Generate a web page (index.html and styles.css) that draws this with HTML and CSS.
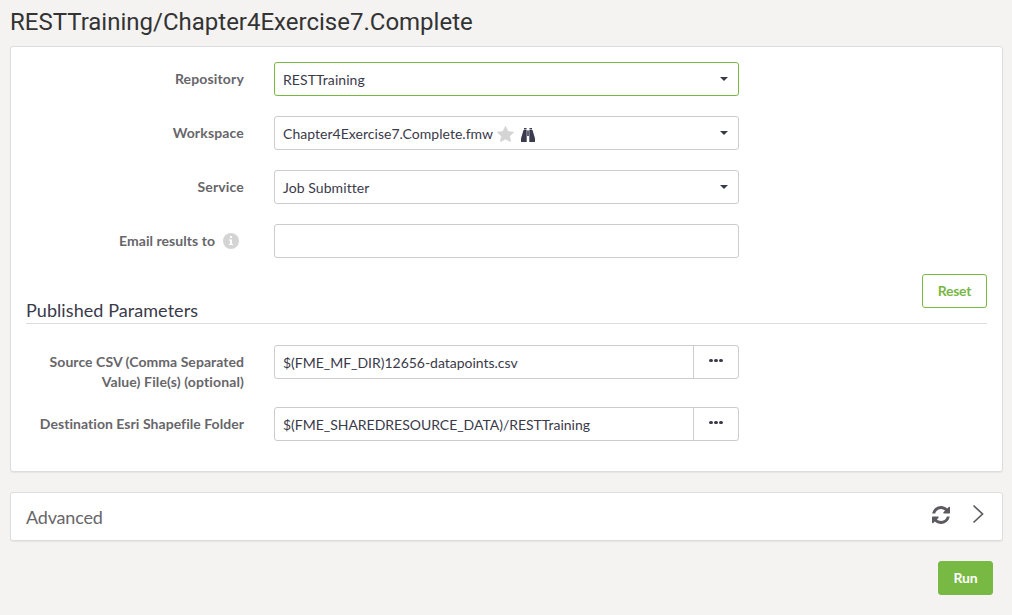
FILE: index.html
```html
<!DOCTYPE html>
<html lang="en">
<head>
<meta charset="utf-8">
<title>RESTTraining/Chapter4Exercise7.Complete</title>
<link rel="stylesheet" href="styles.css">
</head>
<body>
<h1>RESTTraining/Chapter4Exercise7.Complete</h1>
<main class="panel">
  <div class="row"><label class="short">Repository</label><div class="control active"><span class="value">RESTTraining</span><i class="caret"></i></div></div>
  <div class="row"><label class="short">Workspace</label><div class="control"><span class="value work">Chapter4Exercise7.Complete.fmw</span>
    <svg class="star" width="17" height="16" viewBox="0 0 17 16"><path fill="#d4d4d4" stroke="#d4d4d4" stroke-width=".6" stroke-linejoin="round" d="M8.500.3l2.600 5.100 5.600.8-4.100 4 1 5.500-5.100-2.600-5.100 2.600 1-5.500-4.100-4 5.600-.8z"/></svg>
    <svg class="binoculars" width="14" height="14" viewBox="0 0 14 14"><path fill="#3b3b50" d="M3 0h2.500v1.500H3zM8.500 0H11v1.500H8.500zM2.500 2H5.700V14H0V10.500zM8.300 2h3.200L14 10.500V14H8.300zM6.200 2.500h1.600V8H6.200z"/></svg>
    <i class="caret"></i></div></div>
  <div class="row"><label class="short">Service</label><div class="control"><span class="value">Job Submitter</span><i class="caret"></i></div></div>
  <div class="row"><label class="email"><span>Email results to</span><svg width="16" height="16" viewBox="0 0 16 16"><circle cx="8" cy="8" r="8" fill="#d4d4d4"/><path fill="#fff" d="M7 3h2v2H7zM6 6.500h3V11h1v1H6v-1h1V7.500H6z"/></svg></label><div class="control"></div></div>
  <div class="section"><h2>Published Parameters</h2><button class="reset">Reset</button></div>
  <div class="row source"><label>Source CSV (Comma Separated<br><span class="second">Value) File(s) (optional)</span></label><div class="control"><span class="value path">$(FME_MF_DIR)12656-datapoints.csv</span><b class="browse"><i></i><i></i><i></i></b></div></div>
  <div class="row"><label>Destination Esri Shapefile Folder</label><div class="control"><span class="value path">$(FME_SHAREDRESOURCE_DATA)/RESTTraining</span><b class="browse"><i></i><i></i><i></i></b></div></div>
</main>
<section class="panel advanced"><h2>Advanced</h2>
  <svg class="refresh" width="18" height="18" viewBox="0 0 1536 1536"><path fill="#5c5a60" d="M1511 928q0 5-1 7-64 268-268 434.500T764 1536q-146 0-282.500-55T238 1324l-129 129q-19 19-45 19t-45-19-19-45V960q0-26 19-45t45-19h448q26 0 45 19t19 45-19 45l-137 137q71 66 161 102t187 36q134 0 250-65t186-179q11-17 53-117 8-23 30-23h192q13 0 22.500 9.500t9.500 22.500zm25-800v448q0 26-19 45t-45 19h-448q-26 0-45-19t-19-45 19-45l138-138Q969 256 768 256q-134 0-250 65T332 500q-11 17-53 117-8 23-30 23H50q-13 0-22.500-9.500T18 608v-7q65-268 270-434.500T768 0q146 0 284 55.500T1297 212l130-129q19-19 45-19t45 19 19 45z"/></svg>
  <svg class="chevron" width="12" height="20" viewBox="0 0 12 20"><path d="M1.500 1.500l9 8.500-9 8.500" fill="none" stroke="#5c5a60" stroke-width="1.700"/></svg>
</section>
<div class="actions"><button class="run">Run</button></div>
</body>
</html>
```
FILE: styles.css
```css
* { box-sizing: border-box; }
body { margin: 0; background: #f4f3f2; color: #3a3a4a; font: 14px/20px Lato, sans-serif; }
h1 { color: #333; font: 400 24px/30px Roboto, sans-serif; margin: 0; padding: 7px 10px 9px; height: 46px; white-space: nowrap; }
.panel { background: #fff; border: 1px solid #ddd; border-radius: 3px; box-shadow: 0 1px 1px rgba(0,0,0,.06); margin: 0 9px 0 10px; }
main.panel { height: 426px; padding: 15px; }
.row { display: flex; align-items: flex-start; height: 54px; }
label { width: 218px; flex: none; text-align: right; font-weight: 700; letter-spacing: .05px; color: #67666a; padding-top: 7px; white-space: nowrap; }
.short { letter-spacing: .16px; }
.second { letter-spacing: .13px; }
.control { width: 465px; height: 34px; margin-left: 30px; border: 1px solid #ccc; border-radius: 3px; display: flex; align-items: center; padding-left: 8px; white-space: nowrap; }
.value { padding-top: 2px; letter-spacing: .07px; }
.work { letter-spacing: .03px; }
.path { letter-spacing: -.02px; }
.active { border-color: #78b943; }
.caret { margin: 0 10px 0 auto; border: 4px solid transparent; border-top-color: #3a3a4a; border-bottom: 0; }
.star { margin: 1px 0 0 4px; }
.binoculars { margin: 4px 0 0 7px; }
.email { display: flex; justify-content: flex-end; align-items: center; gap: 8px; padding-right: 5px; }
.section { height: 62px; margin-top: -16px; border-bottom: 1px solid #ddd; display: flex; justify-content: space-between; }
h2 { font: 400 18px/24px Lato, sans-serif; margin: 0; }
.section h2 { padding-top: 36px; letter-spacing: .07px; }
button { font: 700 14px/20px Lato, sans-serif; height: 34px; border: 1px solid #78b943; border-radius: 3px; padding: 0; }
.reset { width: 65px; background: #fff; color: #78b943; margin-top: 12px; letter-spacing: -.3px; }
.row.source { height: 62px; margin-top: 21px; }
.browse { display: flex; align-items: center; justify-content: center; gap: 1px; margin-left: auto; width: 45px; height: 32px; border-left: 1px solid #ccc; padding: 0 0 3px; }
.browse i { width: 3.700px; height: 3.400px; border-radius: 50%; background: #3a3a4a; }
.advanced { height: 49px; margin-top: 20px; padding: 0 18px 0 15px; display: flex; align-items: center; }
.advanced h2 { color: #67666a; letter-spacing: -.2px; }
.refresh { margin: 0 22px 4px auto; }
.chevron { margin-bottom: 5px; }
.actions { display: flex; justify-content: flex-end; padding: 20px 19px 0 0; }
.run { width: 55px; background: #78b943; color: #fff; letter-spacing: -.2px; }
```
